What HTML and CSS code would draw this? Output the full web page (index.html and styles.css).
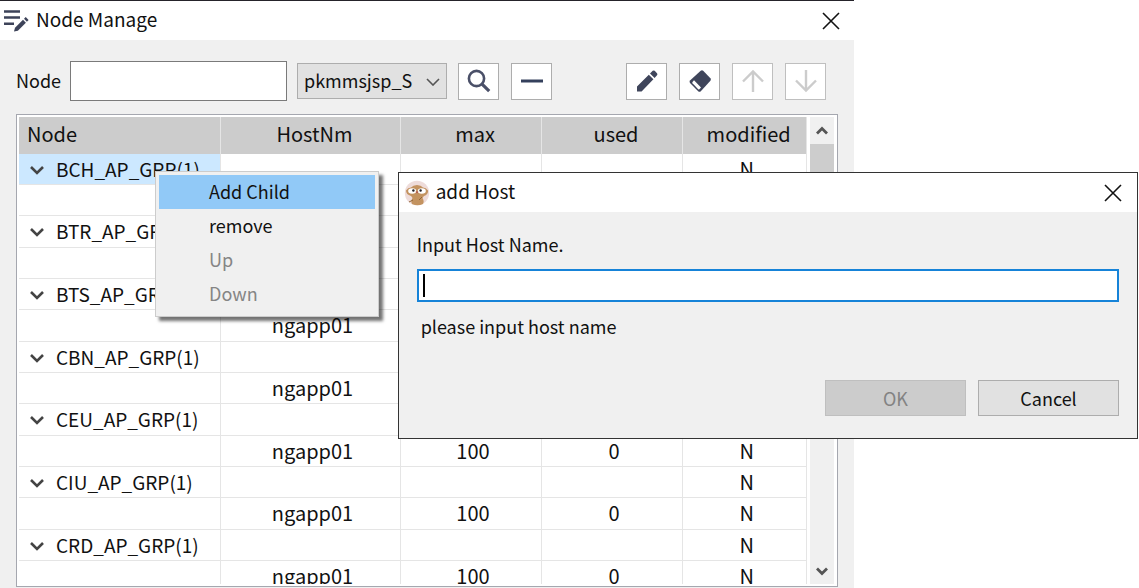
FILE: index.html
```html
<!DOCTYPE html>
<html lang="en">
<head>
<meta charset="utf-8">
<title>Node Manage</title>
<link rel="stylesheet" href="styles.css">
</head>
<body>
<main class="window">
  <header class="titlebar">
    <svg class="title-icon" width="26" height="24" viewBox="0 0 26 24" fill="none" stroke="#3d4359" stroke-width="2.6"><path d="M0 2.500h16M0 8.500h16M0 14.800h10"/><path d="M10 22.500l1-3.700 8-8 2.900 2.900-8 8z" fill="#3d4359" stroke="none"/><path d="M20 9.800l1.700-1.700 2.900 2.900-1.700 1.700z" fill="#3d4359" stroke="none"/></svg>
    <h1 class="title">Node Manage</h1>
    <button class="close" type="button" aria-label="Close"><svg width="18" height="18" viewBox="0 0 18 18"><path d="M1 1l16 16M17 1L1 17"/></svg></button>
  </header>

  <div class="content">
    <div class="toolbar">
      <label class="field-label" for="node">Node</label>
      <input class="node-input" id="node" type="text">
      <div class="select-wrap">
        <select class="server-select" aria-label="Server"><option>pkmmsjsp_S</option></select>
        <svg class="select-arrow" width="14" height="8" viewBox="0 0 14 8"><path d="M1 1l6 6 6-6"/></svg>
      </div>
      <button class="tool search" type="button" aria-label="Search"><svg width="24" height="24" viewBox="0 0 24 24" fill="none" stroke="#4a5068" stroke-width="2.600"><circle cx="9.500" cy="9.500" r="7.600"/><path d="M14.800 14.800l7.400 7.400" stroke-width="3.200"/></svg></button>
      <button class="tool" type="button" aria-label="Collapse"><svg width="24" height="24" viewBox="0 0 24 24"><path d="M1 12h22" stroke="#34405c" stroke-width="3"/></svg></button>
      <div class="tool-group">
        <button class="tool" type="button" aria-label="Edit"><svg width="24" height="24" viewBox="0 0 24 24" fill="#3f455b"><path d="M2 22.500v-5L13.800 5.700l4.600 4.600L6.600 22.500zM15 4.500l2.700-2.700q1-.8 2 0l2.300 2.500q.9 1 0 2L19.600 9z"/></svg></button>
        <button class="tool" type="button" aria-label="Erase"><svg width="24" height="24" viewBox="0 0 24 24"><path d="M12.700 1.800q1.300-1 2.500 0l7.200 7.400q1 1.300 0 2.600L12.800 22.300q-1.300 1-2.600 0L2 14q-1-1.200 0-2.500z" fill="#3f455b"/><path d="M6 11.300l7 7.200-1.600 1.700q-.6.500-1.200 0l-5.700-5.900q-.5-.6 0-1.300z" fill="#fff"/></svg></button>
        <button class="tool" type="button" aria-label="Up" disabled><svg width="24" height="24" viewBox="0 0 24 24" fill="none" stroke="#ccc" stroke-width="2.400"><path d="M12 23V3M2 12.500l10-10 10 10"/></svg></button>
        <button class="tool" type="button" aria-label="Down" disabled><svg width="24" height="24" viewBox="0 0 24 24" fill="none" stroke="#ccc" stroke-width="2.400"><path d="M12 1v20M2 11.500l10 10 10-10"/></svg></button>
      </div>
    </div>

    <div class="grid-frame">
      <div class="grid-view">
        <table class="grid">
          <colgroup><col class="c-node"><col class="c-host"><col class="c-max"><col class="c-used"><col class="c-mod"></colgroup>
          <thead><tr><th scope="col">Node</th><th scope="col">HostNm</th><th scope="col">max</th><th scope="col">used</th><th scope="col">modified</th></tr></thead>
          <tbody>
            <tr><td class="selected"><svg class="chev" width="14" height="9" viewBox="0 0 14 9"><path d="M1 1l6 6 6-6"/></svg>BCH_AP_GRP(1)</td><td></td><td></td><td></td><td>N</td></tr>
            <tr><td></td><td></td><td></td><td></td><td></td></tr>
            <tr><td><svg class="chev" width="14" height="9" viewBox="0 0 14 9"><path d="M1 1l6 6 6-6"/></svg>BTR_AP_GRP(1)</td><td></td><td></td><td></td><td></td></tr>
            <tr><td></td><td></td><td></td><td></td><td></td></tr>
            <tr><td><svg class="chev" width="14" height="9" viewBox="0 0 14 9"><path d="M1 1l6 6 6-6"/></svg>BTS_AP_GRP(1)</td><td></td><td></td><td></td><td></td></tr>
            <tr><td></td><td>ngapp01</td><td></td><td></td><td></td></tr>
            <tr><td><svg class="chev" width="14" height="9" viewBox="0 0 14 9"><path d="M1 1l6 6 6-6"/></svg>CBN_AP_GRP(1)</td><td></td><td></td><td></td><td></td></tr>
            <tr><td></td><td>ngapp01</td><td></td><td></td><td></td></tr>
            <tr><td><svg class="chev" width="14" height="9" viewBox="0 0 14 9"><path d="M1 1l6 6 6-6"/></svg>CEU_AP_GRP(1)</td><td></td><td></td><td></td><td></td></tr>
            <tr><td></td><td>ngapp01</td><td>100</td><td>0</td><td>N</td></tr>
            <tr><td><svg class="chev" width="14" height="9" viewBox="0 0 14 9"><path d="M1 1l6 6 6-6"/></svg>CIU_AP_GRP(1)</td><td></td><td></td><td></td><td>N</td></tr>
            <tr><td></td><td>ngapp01</td><td>100</td><td>0</td><td>N</td></tr>
            <tr><td><svg class="chev" width="14" height="9" viewBox="0 0 14 9"><path d="M1 1l6 6 6-6"/></svg>CRD_AP_GRP(1)</td><td></td><td></td><td></td><td>N</td></tr>
            <tr><td></td><td>ngapp01</td><td>100</td><td>0</td><td>N</td></tr>
          </tbody>
        </table>
      </div>
      <div class="scrollbar" aria-hidden="true">
        <svg class="scroll-arrow" width="12" height="9" viewBox="0 0 12 9"><path d="M1 7.500l5-5 5 5"/></svg>
        <div class="thumb"></div>
        <svg class="scroll-arrow" width="12" height="9" viewBox="0 0 12 9"><path d="M1 1.500l5 5 5-5"/></svg>
      </div>
    </div>
  </div>
</main>

<div class="menu" role="menu">
  <button class="menu-item active" role="menuitem" type="button">Add Child</button>
  <button class="menu-item" role="menuitem" type="button">remove</button>
  <button class="menu-item" role="menuitem" type="button" disabled>Up</button>
  <button class="menu-item" role="menuitem" type="button" disabled>Down</button>
</div>

<section class="dialog" role="dialog" aria-labelledby="dialog-title">
  <header class="titlebar">
    <svg class="avatar" width="26" height="26" viewBox="0 0 26 26"><circle cx="13" cy="13" r="12.200" fill="#eedcda"/><path d="M2 10.500q2-3 5-3Q9 5 13 5t6 2.500q3 0 5 3 .5 4-4 5.500-1 1-1.500 2 2 3 .5 6-5.500 2.500-11 0-1.500-3 .5-6Q8 17 7 16q-5-1.500-5-5.500z" fill="#c39360"/><ellipse cx="8.200" cy="11" rx="4" ry="2.800" fill="#fff"/><ellipse cx="17.800" cy="11" rx="4" ry="2.800" fill="#fff"/><circle cx="9.400" cy="10.500" r="1.200" fill="#252226"/><circle cx="16.600" cy="10.500" r="1.200" fill="#252226"/><path d="M11.500 11.500h3L13 13.500z" fill="#b0504a"/><path d="M5 22l4-2M15 20l3-3" stroke="#916638" fill="none"/></svg>
    <h2 class="title" id="dialog-title">add Host</h2>
    <button class="close" type="button" aria-label="Close"><svg width="18" height="18" viewBox="0 0 18 18"><path d="M1 1l16 16M17 1L1 17"/></svg></button>
  </header>
  <form class="dialog-body">
    <label for="host">Input Host Name.</label>
    <div class="host-field"><input class="host-input" id="host" type="text" aria-describedby="hint"><span class="caret"></span></div>
    <p class="hint" id="hint">please input host name</p>
    <div class="actions">
      <button class="action" type="submit" disabled>OK</button>
      <button class="action" type="button">Cancel</button>
    </div>
  </form>
</section>
</body>
</html>
```
FILE: styles.css
```css
* {
  box-sizing: border-box;
}

body {
  position: relative;
  height: 100vh;
  margin: 0;
  overflow: hidden;
  background: #fff;
  color: #111;
  font: 18px/24px "Noto Sans CJK KR", "Noto Sans", sans-serif;
}

button,
input,
select {
  margin: 0;
  border-radius: 0;
  color: inherit;
  font: inherit;
}

.window {
  display: flex;
  flex-direction: column;
  width: 75%;
  height: 100vh;
  border-top: 1px solid #25232a;
  background: #f0f0f0;
}

.titlebar {
  display: flex;
  flex: none;
  align-items: center;
  height: 39px;
  padding: 0 14px 0 4px;
  background: #fff;
}

.title {
  flex: 1;
  margin: 0;
  padding: 0 0 3px 6px;
  font-size: 19px;
  font-weight: 400;
}

.close {
  display: flex;
  padding: 0;
  border: 0;
  background: none;
}

.close path {
  fill: none;
  stroke: #111;
  stroke-width: 1.6;
}

.content {
  display: flex;
  flex: 1;
  flex-direction: column;
  gap: 13px;
  min-height: 0;
  padding: 21px 16px 1px;
}

.toolbar {
  display: flex;
  align-items: center;
  height: 40px;
  padding-right: 12px;
}

.field-label {
  width: 54px;
  padding-bottom: 2px;
}

.node-input {
  width: 217px;
  height: 40px;
  margin-right: 10px;
  padding: 0 6px;
  border: 1px solid #7a7a7a;
  background: #fff;
}

.select-wrap {
  position: relative;
  width: 150px;
  margin-right: 11px;
}

.server-select {
  display: block;
  width: 100%;
  height: 36px;
  padding: 0 6px 2px;
  border: 1px solid #adadad;
  appearance: none;
  background: #e1e1e1;
}

.select-arrow {
  position: absolute;
  top: 15px;
  right: 7px;
  fill: none;
  stroke: #555;
  stroke-width: 1.6;
  pointer-events: none;
}

.tool {
  display: flex;
  align-items: center;
  justify-content: center;
  width: 41px;
  height: 37px;
  padding: 0;
  border: 1px solid #adadad;
  background: #fff;
}

.tool:disabled {
  border-color: #bfbfbf;
}

.search {
  margin-right: 12px;
}

.tool-group {
  display: flex;
  gap: 12px;
  margin-left: auto;
}

.grid-frame {
  display: flex;
  flex: 1;
  gap: 3px;
  min-height: 0;
  padding: 2px 3px 2px 2px;
  border: 1px solid #a5a7af;
  background: #fff;
}

.grid-view {
  flex: 1;
  overflow: hidden;
}

.grid {
  width: 100%;
  border-collapse: separate;
  border-spacing: 0;
  table-layout: fixed;
  font-size: 20px;
}

.c-node {
  width: 202px;
}

.c-host {
  width: 180px;
}

.c-max,
.c-used {
  width: 141px;
}

.grid th,
.grid td {
  height: 31px;
  padding: 0 0 1px 4px;
  border-right: 1px solid #e5e5e5;
  border-bottom: 1px solid #e5e5e5;
  text-align: center;
  line-height: 24px;
}

.grid tbody tr:nth-child(3n) td {
  height: 32px;
}

.grid th {
  height: 37px;
  padding-bottom: 3px;
  padding-left: 8px;
  border-bottom: 0;
  background: #ccc;
  font-weight: 400;
}

.grid th:first-child,
.grid td:first-child {
  text-align: left;
}

.grid td:first-child {
  padding-left: 11px;
  font-size: 19px;
}

.grid .selected {
  background: #cce8ff;
}

.chev {
  margin-right: 12px;
  vertical-align: 2px;
  fill: none;
  stroke: #444;
  stroke-width: 2.6;
}

.scrollbar {
  display: flex;
  flex-direction: column;
  align-items: center;
  width: 24px;
  padding: 9px 0 8px;
  background: #f0f0f0;
}

.scroll-arrow {
  fill: none;
  stroke: #555;
  stroke-width: 2.8;
}

.thumb {
  width: 100%;
  height: 160px;
  margin: 9px 0 auto;
  background: #cdcdcd;
}

.menu {
  position: absolute;
  top: 171px;
  left: 155px;
  width: 224px;
  padding: 3px 3px 5px;
  border: 1px solid #ccc;
  background: #f0f0f0;
  box-shadow: 4px 4px 3px rgba(0, 0, 0, 0.55);
}

.menu-item {
  display: block;
  width: 100%;
  height: 34px;
  padding: 0 0 2px 50px;
  border: 0;
  background: none;
  text-align: left;
}

.menu-item:disabled {
  color: #858585;
}

.menu-item.active {
  background: #91c9f7;
}

.dialog {
  position: absolute;
  top: 172px;
  right: 1px;
  width: 65%;
  border: 1px solid #333;
  background: #f0f0f0;
}

.dialog .titlebar {
  padding-left: 5px;
  padding-right: 15px;
}

.dialog-body {
  padding: 20px 18px 22px;
}

.dialog-body label {
  display: block;
}

.host-field {
  position: relative;
  margin-top: 13px;
}

.host-input {
  display: block;
  width: 100%;
  height: 33px;
  padding: 0 6px;
  border: 2px solid #1683d8;
  outline: 0;
  background: #fff;
}

.caret {
  position: absolute;
  top: 5px;
  left: 6px;
  width: 2px;
  height: 23px;
  background: #000;
}

.hint {
  margin: 12px 0 0 4px;
}

.actions {
  display: flex;
  gap: 12px;
  justify-content: flex-end;
  margin-top: 42px;
}

.action {
  width: 141px;
  height: 36px;
  padding: 0;
  border: 1px solid #adadad;
  background: #e1e1e1;
}

.action:disabled {
  border-color: #bfbfbf;
  background: #ccc;
  color: #838383;
}
```
